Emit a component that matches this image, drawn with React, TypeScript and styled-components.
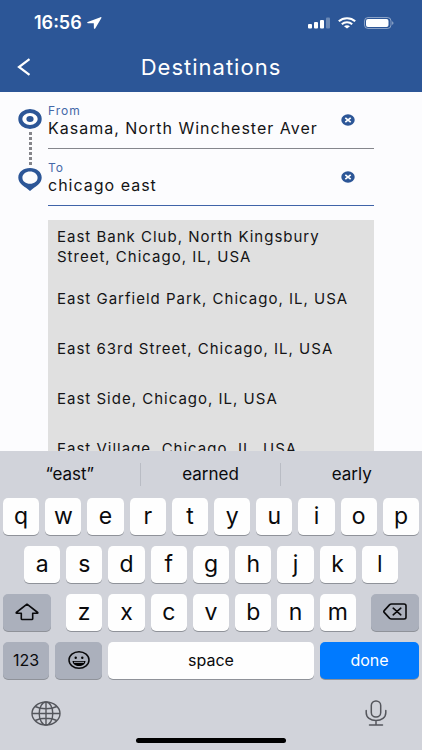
import React, { useState } from "react";
import styled, { createGlobalStyle } from "styled-components";

const blue = "#2c5697";

const GlobalStyle = createGlobalStyle`
  * { box-sizing: border-box; }
  body { margin: 0; background: #fcfcfe; }
  body, button, input { font-family: Inter, "Liberation Sans", sans-serif; }
  button { border: 0; padding: 0; margin: 0; color: inherit; cursor: pointer; }
  svg { display: block; }
`;

const Screen = styled.div`
  display: flex;
  flex-direction: column;
  height: 100vh;
  overflow: hidden;
  background: #fcfcfe;
  color: #141416;
`;

const Header = styled.header`
  flex: none;
  background: ${blue};
  color: #fff;
`;

const StatusBar = styled.div`
  display: flex;
  align-items: center;
  justify-content: space-between;
  height: 46px;
  padding: 0 28px 0 34px;
`;

const StatusGroup = styled.div<{ $gap: number }>`
  display: flex;
  align-items: center;
  gap: ${(p) => p.$gap}px;
`;

const Time = styled.span`
  font-size: 18px;
  line-height: 20px;
  font-weight: 600;
`;

const NavBar = styled.div`
  display: grid;
  grid-template-columns: 48px 1fr 48px;
  align-items: center;
  height: 46px;
  padding-bottom: 4px;
`;

const BackButton = styled.button`
  display: flex;
  align-items: center;
  height: 32px;
  padding-left: 17px;
  background: none;
`;

const Title = styled.h1`
  margin: 0;
  font-size: 22px;
  line-height: 24px;
  font-weight: 400;
  letter-spacing: 1px;
  text-align: center;
`;

const Main = styled.main`
  flex: 1;
  min-height: 0;
  overflow: hidden;
  display: grid;
  grid-template-columns: 24px 1fr;
  align-items: start;
  column-gap: 6px;
  padding: 12px 48px 0 18px;
`;

const Rail = styled.div`
  display: flex;
  flex-direction: column;
  align-items: center;
  gap: 3px;
  padding-top: 5px;
`;

const Dots = styled.div`
  width: 3px;
  height: 33px;
  background: repeating-linear-gradient(#85858a 0 3px, transparent 3px 5px);
`;

const Form = styled.form`
  display: flex;
  flex-direction: column;
  gap: 12px;
  min-width: 0;
`;

const FieldRow = styled.div<{ $active?: boolean }>`
  display: flex;
  align-items: flex-start;
  padding-bottom: 10px;
  border-bottom: 1px solid ${(p) => (p.$active ? "#3f63a8" : "#85868c")};
`;

const FieldText = styled.div`
  display: flex;
  flex-direction: column;
  flex: 1;
  min-width: 0;
`;

const Label = styled.label`
  font-size: 12px;
  line-height: 14px;
  letter-spacing: 1px;
  color: #4468a8;
`;

const Input = styled.input`
  width: 100%;
  height: 20px;
  padding: 0;
  border: 0;
  outline: 0;
  background: none;
  color: inherit;
  font-size: 16px;
  line-height: 20px;
  letter-spacing: 1px;
`;

const ClearButton = styled.button`
  display: flex;
  flex: none;
  justify-content: center;
  align-items: center;
  width: 52px;
  height: 32px;
  margin-left: -4px;
  background: none;
`;

const Results = styled.ul`
  margin: 2px 0 0;
  padding: 0;
  list-style: none;
  background: #e0e0e0;
`;

const Result = styled.button`
  display: flex;
  align-items: flex-start;
  width: 100%;
  min-height: 50px;
  padding: 7px 9px 15px;
  background: none;
  font-size: 15px;
  line-height: 20px;
  letter-spacing: 1px;
  text-align: left;
`;

const Keyboard = styled.section`
  flex: none;
  background: #d1d3da;
  color: #0a0a0c;
  padding-bottom: 7px;
`;

const Suggestions = styled.div`
  display: grid;
  grid-template-columns: repeat(3, 1fr);
  padding: 12px 0;
`;

const Suggestion = styled.button`
  height: 23px;
  background: none;
  font-size: 17px;
  line-height: 23px;
  &:not(:last-child) { border-right: 1px solid #b9bcc4; }
`;

const Rows = styled.div`
  display: flex;
  flex-direction: column;
  gap: 11px;
  padding: 0 3px;
`;

const KeyRow = styled.div<{ $inset?: number }>`
  display: flex;
  gap: 6px;
  padding: 0 ${(p) => p.$inset ?? 0}px;
`;

const LetterGroup = styled.div`
  display: flex;
  flex: 1;
  gap: 6px;
  margin: 0 9px;
`;

const Key = styled.button<{ $tone?: "dark" | "blue"; $width?: number; $size?: number }>`
  display: flex;
  align-items: center;
  justify-content: center;
  flex: ${(p) => (p.$width ? `0 0 ${p.$width}px` : "1 1 0")};
  min-width: 0;
  height: 37px;
  padding-bottom: 2px;
  border-radius: 5px;
  box-shadow: 0 1px 0 #8f9299;
  background: ${(p) => (p.$tone === "dark" ? "#abb0bc" : p.$tone === "blue" ? "#007aff" : "#fefefe")};
  color: ${(p) => (p.$tone === "blue" ? "#fff" : "inherit")};
  font-size: ${(p) => p.$size ?? 23}px;
  line-height: 24px;
`;

const Tools = styled.div`
  display: flex;
  justify-content: space-between;
  align-items: center;
  height: 59px;
  padding: 9px 35px 0 31px;
`;

const ToolButton = styled.button`
  background: none;
  color: #54565c;
`;

const HomeIndicator = styled.div`
  width: 150px;
  height: 5px;
  margin: 0 auto;
  border-radius: 3px;
  background: #000;
`;

const LocationArrow = () => (
  <svg width="15" height="12" viewBox="0 0 15 12" aria-hidden="true">
    <path d="M13.500.2.700 5.100c-.8.300-.6 1.100.2 1.100l5.900.1.100 4.900c0 .8.900.9 1.300.2l6.200-10.300c.3-.6-.2-1.200-.9-.9Z" fill="#fff" />
  </svg>
);

const Signal = () => (
  <svg width="22" height="12" viewBox="0 0 22 12" fill="#fff" aria-hidden="true">
    <rect x="0" y="7" width="4" height="4.500" rx="1" />
    <rect x="6" y="5" width="4" height="6.500" rx="1" />
    <rect x="12" y="3" width="4" height="8.500" rx="1" />
    <rect x="18" y="0.500" width="4" height="11" rx="1" opacity=".3" />
  </svg>
);

const Wifi = () => (
  <svg width="18" height="12" viewBox="0 0 18 12" aria-hidden="true">
    <g fill="none" stroke="#fff" strokeWidth="2">
      <path d="M.8 4.300C5.200.100 12.800.100 17.200 4.300" />
      <path d="M3.800 7.200c2.800-2.600 7.600-2.600 10.400 0" />
    </g>
    <path d="M9 11.600 6 9.200c1.600-1.400 4.400-1.400 6 0Z" fill="#fff" />
  </svg>
);

const Battery = () => (
  <svg width="30" height="12" viewBox="0 0 30 12" aria-hidden="true">
    <rect x=".5" y=".5" width="26.500" height="11" rx="3.500" fill="none" stroke="#fff" opacity=".45" />
    <rect x="2" y="2" width="22.500" height="8" rx="2" fill="#fff" />
    <path d="M28.200 4.200c1.700.5 1.700 3.100 0 3.600Z" fill="#fff" opacity=".5" />
  </svg>
);

const BackIcon = () => (
  <svg width="14" height="18" viewBox="0 0 14 18" aria-hidden="true">
    <path d="M12.500 1.200 2 9l10.500 7.800" fill="none" stroke="#fff" strokeWidth="2.200" />
  </svg>
);

const OriginIcon = () => (
  <svg width="24" height="20" viewBox="0 0 24 20" aria-hidden="true">
    <ellipse cx="12" cy="10" rx="9.700" ry="7.900" fill="#fff" stroke={blue} strokeWidth="4" />
    <ellipse cx="12" cy="10" rx="3.600" ry="3" fill={blue} />
  </svg>
);

const PinIcon = () => (
  <svg width="24" height="23" viewBox="0 0 24 23" aria-hidden="true">
    <path
      fill={blue}
      fillRule="evenodd"
      d="M12 0C5.300 0 .3 4 .3 9.400c0 5.100 4.500 8.200 7.700 10.400L12 23l4-3.200c3.200-2.200 7.700-5.300 7.700-10.400C23.700 4 18.700 0 12 0Zm0 3.600c4.200 0 7.600 2.700 7.600 6.100s-3.400 6.100-7.600 6.100-7.600-2.700-7.600-6.100 3.400-6.100 7.600-6.100Z"
    />
  </svg>
);

const ClearIcon = () => (
  <svg width="14" height="12" viewBox="0 0 14 12" aria-hidden="true">
    <ellipse cx="7" cy="6" rx="6.700" ry="5.700" fill={blue} />
    <path d="m4.300 3.800 5.400 4.400m0-4.400L4.300 8.200" stroke="#fff" strokeWidth="1.700" />
  </svg>
);

const ShiftIcon = () => (
  <svg width="24" height="18" viewBox="0 0 24 18" aria-hidden="true">
    <path d="M12 1.200 1.300 9.500c-.4.400-.2.700.3.700h4.700v5.500c0 .5.300.8.900.8h9.600c.6 0 .9-.3.900-.8v-5.500h4.700c.5 0 .7-.3.300-.7Z" fill="none" stroke="#0a0a0c" strokeWidth="1.600" strokeLinejoin="round" />
  </svg>
);

const DeleteIcon = () => (
  <svg width="24" height="17" viewBox="0 0 24 17" fill="none" stroke="#0a0a0c" strokeWidth="1.600" strokeLinejoin="round" strokeLinecap="round" aria-hidden="true">
    <path d="M8.500 1H21c1.300 0 2 .6 2 1.700v11.600c0 1.100-.7 1.700-2 1.700H8.500c-.8 0-1.300-.2-1.800-.6L1.200 9.400c-.6-.6-.6-1.200 0-1.800l5.500-6C7.200 1.200 7.700 1 8.500 1Z" />
    <path d="m10.200 5.200 7.600 6.600m0-6.600-7.600 6.600" />
  </svg>
);

const EmojiIcon = () => (
  <svg width="22" height="18" viewBox="0 0 22 18" aria-hidden="true">
    <ellipse cx="11" cy="9" rx="10" ry="8.200" fill="none" stroke="#0a0a0c" strokeWidth="1.500" />
    <ellipse cx="7.700" cy="6.700" rx="1.200" ry="1.300" />
    <ellipse cx="14.300" cy="6.700" rx="1.200" ry="1.300" />
    <path d="M4.500 10h13c-.3 3.200-3 5-6.500 5s-6.200-1.800-6.500-5Z" />
    <path d="M6 11.300h10" stroke="#abb0bc" strokeWidth="1" />
  </svg>
);

const GlobeIcon = () => (
  <svg width="30" height="25" viewBox="0 0 30 25" fill="none" stroke="currentColor" strokeWidth="1.400" aria-hidden="true">
    <ellipse cx="15" cy="12.500" rx="14" ry="11.500" />
    <ellipse cx="15" cy="12.500" rx="6.800" ry="11.500" />
    <path d="M15 1v23M1 12.500h28M4.200 5.500c6 3 15.600 3 21.600 0M4.200 19.500c6-3 15.600-3 21.600 0" />
  </svg>
);

const MicIcon = () => (
  <svg width="22" height="26" viewBox="0 0 22 26" fill="none" stroke="currentColor" strokeWidth="1.500" strokeLinecap="round" aria-hidden="true">
    <rect x="6.300" y="1" width="9.400" height="16" rx="4.500" />
    <path d="M1.200 10.500v2.200c0 4.800 4.200 7.800 9.800 7.800s9.800-3 9.800-7.800v-2.200M11 20.500V25M4.500 25h13" />
  </svg>
);

const places = [
  "East Bank Club, North Kingsbury Street, Chicago, IL, USA",
  "East Garfield Park, Chicago, IL, USA",
  "East 63rd Street, Chicago, IL, USA",
  "East Side, Chicago, IL, USA",
  "East Village, Chicago, IL, USA",
];

const suggestions = ["“east”", "earned", "early"];

type FieldProps = {
  id: string;
  label: string;
  value: string;
  active?: boolean;
  onChange: (value: string) => void;
};

const Field = ({ id, label, value, active, onChange }: FieldProps) => (
  <FieldRow $active={active}>
    <FieldText>
      <Label htmlFor={id}>{label}</Label>
      <Input id={id} value={value} autoComplete="off" spellCheck={false} onChange={(e) => onChange(e.target.value)} />
    </FieldText>
    <ClearButton type="button" aria-label={`Clear ${label}`} onClick={() => onChange("")}>
      <ClearIcon />
    </ClearButton>
  </FieldRow>
);

export default function App() {
  const [from, setFrom] = useState("Kasama, North Winchester Aver");
  const [to, setTo] = useState("chicago east");

  const letters = (text: string) =>
    text.split("").map((letter) => (
      <Key key={letter} type="button" onClick={() => setTo(to + letter)}>
        {letter}
      </Key>
    ));

  return (
    <Screen>
      <GlobalStyle />
      <Header>
        <StatusBar>
          <StatusGroup $gap={5}>
            <Time>16:56</Time>
            <LocationArrow />
          </StatusGroup>
          <StatusGroup $gap={8}>
            <Signal />
            <Wifi />
            <Battery />
          </StatusGroup>
        </StatusBar>
        <NavBar>
          <BackButton type="button" aria-label="Back">
            <BackIcon />
          </BackButton>
          <Title>Destinations</Title>
        </NavBar>
      </Header>

      <Main>
        <Rail>
          <OriginIcon />
          <Dots />
          <PinIcon />
        </Rail>
        <Form onSubmit={(e) => e.preventDefault()}>
          <Field id="from" label="From" value={from} onChange={setFrom} />
          <Field id="to" label="To" value={to} active onChange={setTo} />
          <Results>
            {places.map((place) => (
              <li key={place}>
                <Result type="button" onClick={() => setTo(place)}>{place}</Result>
              </li>
            ))}
          </Results>
        </Form>
      </Main>

      <Keyboard aria-label="Keyboard">
        <Suggestions>
          {suggestions.map((word) => (
            <Suggestion key={word} type="button">{word}</Suggestion>
          ))}
        </Suggestions>
        <Rows>
          <KeyRow>{letters("qwertyuiop")}</KeyRow>
          <KeyRow $inset={21}>{letters("asdfghjkl")}</KeyRow>
          <KeyRow>
            <Key type="button" $tone="dark" $width={48} aria-label="Shift"><ShiftIcon /></Key>
            <LetterGroup>{letters("zxcvbnm")}</LetterGroup>
            <Key type="button" $tone="dark" $width={48} aria-label="Delete" onClick={() => setTo(to.slice(0, -1))}><DeleteIcon /></Key>
          </KeyRow>
          <KeyRow>
            <Key type="button" $tone="dark" $width={46} $size={16}>123</Key>
            <Key type="button" $tone="dark" $width={47} aria-label="Emoji"><EmojiIcon /></Key>
            <Key type="button" $size={16} onClick={() => setTo(to + " ")}>space</Key>
            <Key type="button" $tone="blue" $width={99} $size={16}>done</Key>
          </KeyRow>
        </Rows>
        <Tools>
          <ToolButton type="button" aria-label="Next keyboard"><GlobeIcon /></ToolButton>
          <ToolButton type="button" aria-label="Dictate"><MicIcon /></ToolButton>
        </Tools>
        <HomeIndicator />
      </Keyboard>
    </Screen>
  );
}
